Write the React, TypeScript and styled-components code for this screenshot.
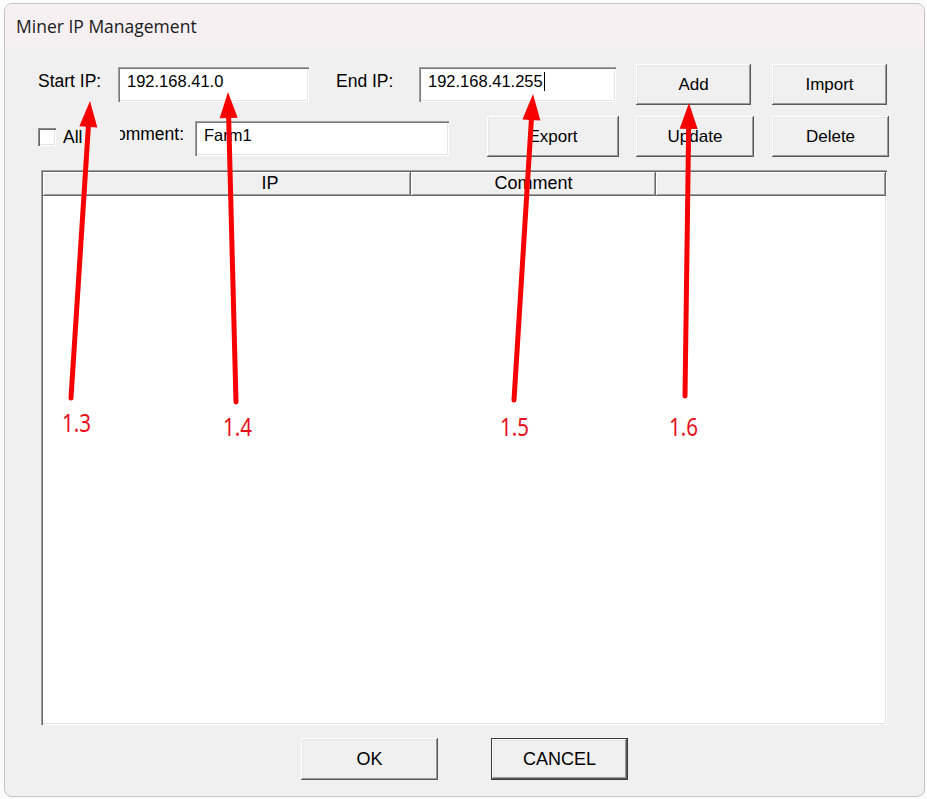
import React from 'react'
import styled, { createGlobalStyle } from 'styled-components'

// ─── Global ────────────────────────────────────────────────────

const GlobalStyle = createGlobalStyle`
  html, body {
    margin: 0;
    padding: 0;
    background: #fbfbfb;
  }
  body {
    font-family: "Liberation Sans", Arial, sans-serif;
    color: #000;
  }
  * { box-sizing: border-box; }
`

// ─── Window frame ──────────────────────────────────────────────

const Screen = styled.div`
  position: relative;
  width: 927px;
  height: 799px;
  padding: 3px 2px 2px 4px;
`

const Dialog = styled.div`
  height: 100%;
  display: flex;
  flex-direction: column;
  border: 1px solid #c4c4c4;
  border-radius: 8px;
  background: #f0f0f0;
  overflow: hidden;
`

const TitleBar = styled.div`
  flex: none;
  height: 43px;
  display: flex;
  align-items: center;
  padding-left: 11px;
  background: #f6f0f3;
  font-family: "Open Sans", "Noto Sans", sans-serif;
  font-size: 17.5px;
  color: #1a1a1a;
`

const Body = styled.div`
  flex: 1;
  display: flex;
  flex-direction: column;
  padding: 17px 0 0 33px;
`

const Row = styled.div<{ $mt?: number }>`
  display: flex;
  align-items: center;
  height: 41px;
  margin-top: ${({ $mt }) => $mt ?? 0}px;
`

// ─── Controls ──────────────────────────────────────────────────

const Label = styled.span<{ $w: number; $ml?: number }>`
  flex: none;
  width: ${({ $w }) => $w}px;
  margin-left: ${({ $ml }) => $ml ?? 0}px;
  padding-bottom: 6px;
  font-size: 17.5px;
  white-space: nowrap;
`

const ClippedLabel = styled.span<{ $w: number }>`
  flex: none;
  width: ${({ $w }) => $w}px;
  display: flex;
  justify-content: flex-end;
  overflow: hidden;
  white-space: nowrap;
  font-size: 17.5px;
  padding-bottom: 4px;
`

const TextField = styled.div<{ $w: number; $ml?: number; $mt?: number }>`
  flex: none;
  width: ${({ $w }) => $w}px;
  height: 35px;
  margin: ${({ $mt }) => $mt ?? 0}px 0 0 ${({ $ml }) => $ml ?? 0}px;
  padding: 4px 0 0 9px;
  background: #fff;
  font-size: 16.5px;
  line-height: 20px;
  white-space: nowrap;
  box-shadow:
    inset 1px 1px #a0a0a0,
    inset 2px 2px #7a7a7a,
    inset -1px -1px #fff,
    inset -2px -2px #e6e6e6;
`

const Caret = styled.span`
  display: inline-block;
  width: 1px;
  height: 19px;
  margin-left: 1px;
  vertical-align: -4px;
  background: #000;
`

const Button = styled.button<{ $w: number; $h?: number; $ml?: number; $default?: boolean }>`
  flex: none;
  width: ${({ $w }) => $w}px;
  height: ${({ $h }) => $h ?? 41}px;
  margin: 0 0 0 ${({ $ml }) => $ml ?? 0}px;
  padding: 0;
  border: ${({ $default }) => ($default ? '1px solid #3c3c3c' : 'none')};
  background: #f0f0f0;
  font-family: "Liberation Sans", Arial, sans-serif;
  font-size: ${({ $h }) => ($h ? 18 : 17)}px;
  color: #000;
  box-shadow:
    inset -1px -1px #5a5a5a,
    inset 1px 1px #fff,
    inset -2px -2px #9a9a9a,
    inset 2px 2px #e8e8e8;
`

const CheckArea = styled.label`
  flex: none;
  width: 82px;
  display: flex;
  align-items: center;
  gap: 7px;
  font-size: 17.5px;
  padding-top: 1px;
`

const CheckBox = styled.span`
  width: 18px;
  height: 18px;
  background: #fff;
  box-shadow:
    inset 1px 1px #8a8a8a,
    inset 2px 2px #6a6a6a,
    inset -1px -1px #fff,
    inset -2px -2px #e3e3e3;
`

// ─── List view ─────────────────────────────────────────────────

const ListView = styled.div`
  flex: none;
  width: 846px;
  height: 555px;
  margin: 13px 0 0 3px;
  padding: 2px 1px 1px 2px;
  background: #fff;
  box-shadow:
    inset 1px 1px #a0a0a0,
    inset 2px 2px #696969,
    inset -1px -1px #fff,
    inset -2px -2px #e3e3e3;
`

const HeaderRow = styled.div`
  display: flex;
  height: 24px;
`

const HeaderCell = styled.div<{ $w?: number; $pl?: number }>`
  flex: ${({ $w }) => ($w ? 'none' : '1')};
  width: ${({ $w }) => ($w ? `${$w}px` : 'auto')};
  display: flex;
  align-items: center;
  justify-content: center;
  padding: 0 0 1px ${({ $pl }) => $pl ?? 0}px;
  background: #f0f0f0;
  font-size: 18px;
  box-shadow:
    inset -1px -1px #696969,
    inset 1px 1px #fff,
    inset -2px -2px #a0a0a0;
`

// ─── Footer ────────────────────────────────────────────────────

const Footer = styled.div`
  display: flex;
  justify-content: center;
  gap: 53px;
  margin: 13px 0 0 -33px;
`

// ─── Callouts drawn over the dialog ────────────────────────────

const Callouts = styled.svg`
  position: absolute;
  left: 0;
  top: 0;
  pointer-events: none;
`

const CalloutText = styled.text`
  font-family: "Liberation Sans Narrow", "Noto Sans", sans-serif;
  font-size: 25px;
  fill: #e8101a;
`

type Arrow = { from: [number, number]; tip: [number, number]; label: string; lx: number; ly: number }

const arrows: Arrow[] = [
  { from: [71, 398], tip: [90, 101], label: '1.3', lx: 62, ly: 432 },
  { from: [236, 402], tip: [228, 92], label: '1.4', lx: 223, ly: 436 },
  { from: [514, 400], tip: [533, 94], label: '1.5', lx: 500, ly: 436 },
  { from: [685, 396], tip: [689, 103], label: '1.6', lx: 669, ly: 436 },
]

function ArrowMark({ from, tip, label, lx, ly }: Arrow) {
  const dx = tip[0] - from[0]
  const dy = tip[1] - from[1]
  const len = Math.hypot(dx, dy)
  const ux = dx / len
  const uy = dy / len
  const head = 26
  const half = 9
  const bx = tip[0] - ux * head
  const by = tip[1] - uy * head
  const pts = [
    `${tip[0]},${tip[1]}`,
    `${bx - uy * half},${by + ux * half}`,
    `${bx + uy * half},${by - ux * half}`,
  ].join(' ')
  return (
    <g>
      <line x1={from[0]} y1={from[1]} x2={bx + ux * 2} y2={by + uy * 2} stroke="#f80000" strokeWidth={5} strokeLinecap="round" />
      <polygon points={pts} fill="#f80000" />
      <CalloutText x={lx} y={ly} textLength={29} lengthAdjust="spacingAndGlyphs">
        {label}
      </CalloutText>
    </g>
  )
}

// ─── Component ─────────────────────────────────────────────────

export default function App() {
  return (
    <>
      <GlobalStyle />
      <Screen>
        <Dialog>
          <TitleBar>Miner IP Management</TitleBar>
          <Body>
            <Row>
              <Label $w={80}>Start IP:</Label>
              <TextField $w={191}>192.168.41.0</TextField>
              <Label $w={83} $ml={27}>End IP:</Label>
              <TextField $w={197}>192.168.41.255<Caret /></TextField>
              <Button $w={115} $ml={20}>Add</Button>
              <Button $w={115} $ml={21}>Import</Button>
            </Row>

            <Row $mt={11}>
              <CheckArea>
                <CheckBox />
                All
              </CheckArea>
              <ClippedLabel $w={64}>Comment:</ClippedLabel>
              <TextField $w={254} $ml={11} $mt={4}>Farm1</TextField>
              <Button $w={132} $ml={38}>Export</Button>
              <Button $w={118} $ml={17}>Update</Button>
              <Button $w={117} $ml={18}>Delete</Button>
            </Row>

            <ListView>
              <HeaderRow>
                <HeaderCell $w={368} $pl={86}>IP</HeaderCell>
                <HeaderCell $w={245}>Comment</HeaderCell>
                <HeaderCell />
              </HeaderRow>
            </ListView>

            <Footer>
              <Button $w={137} $h={42}>OK</Button>
              <Button $w={137} $h={42} $default>CANCEL</Button>
            </Footer>
          </Body>
        </Dialog>

        <Callouts width={927} height={799}>
          {arrows.map((a) => (
            <ArrowMark key={a.label} {...a} />
          ))}
        </Callouts>
      </Screen>
    </>
  )
}
